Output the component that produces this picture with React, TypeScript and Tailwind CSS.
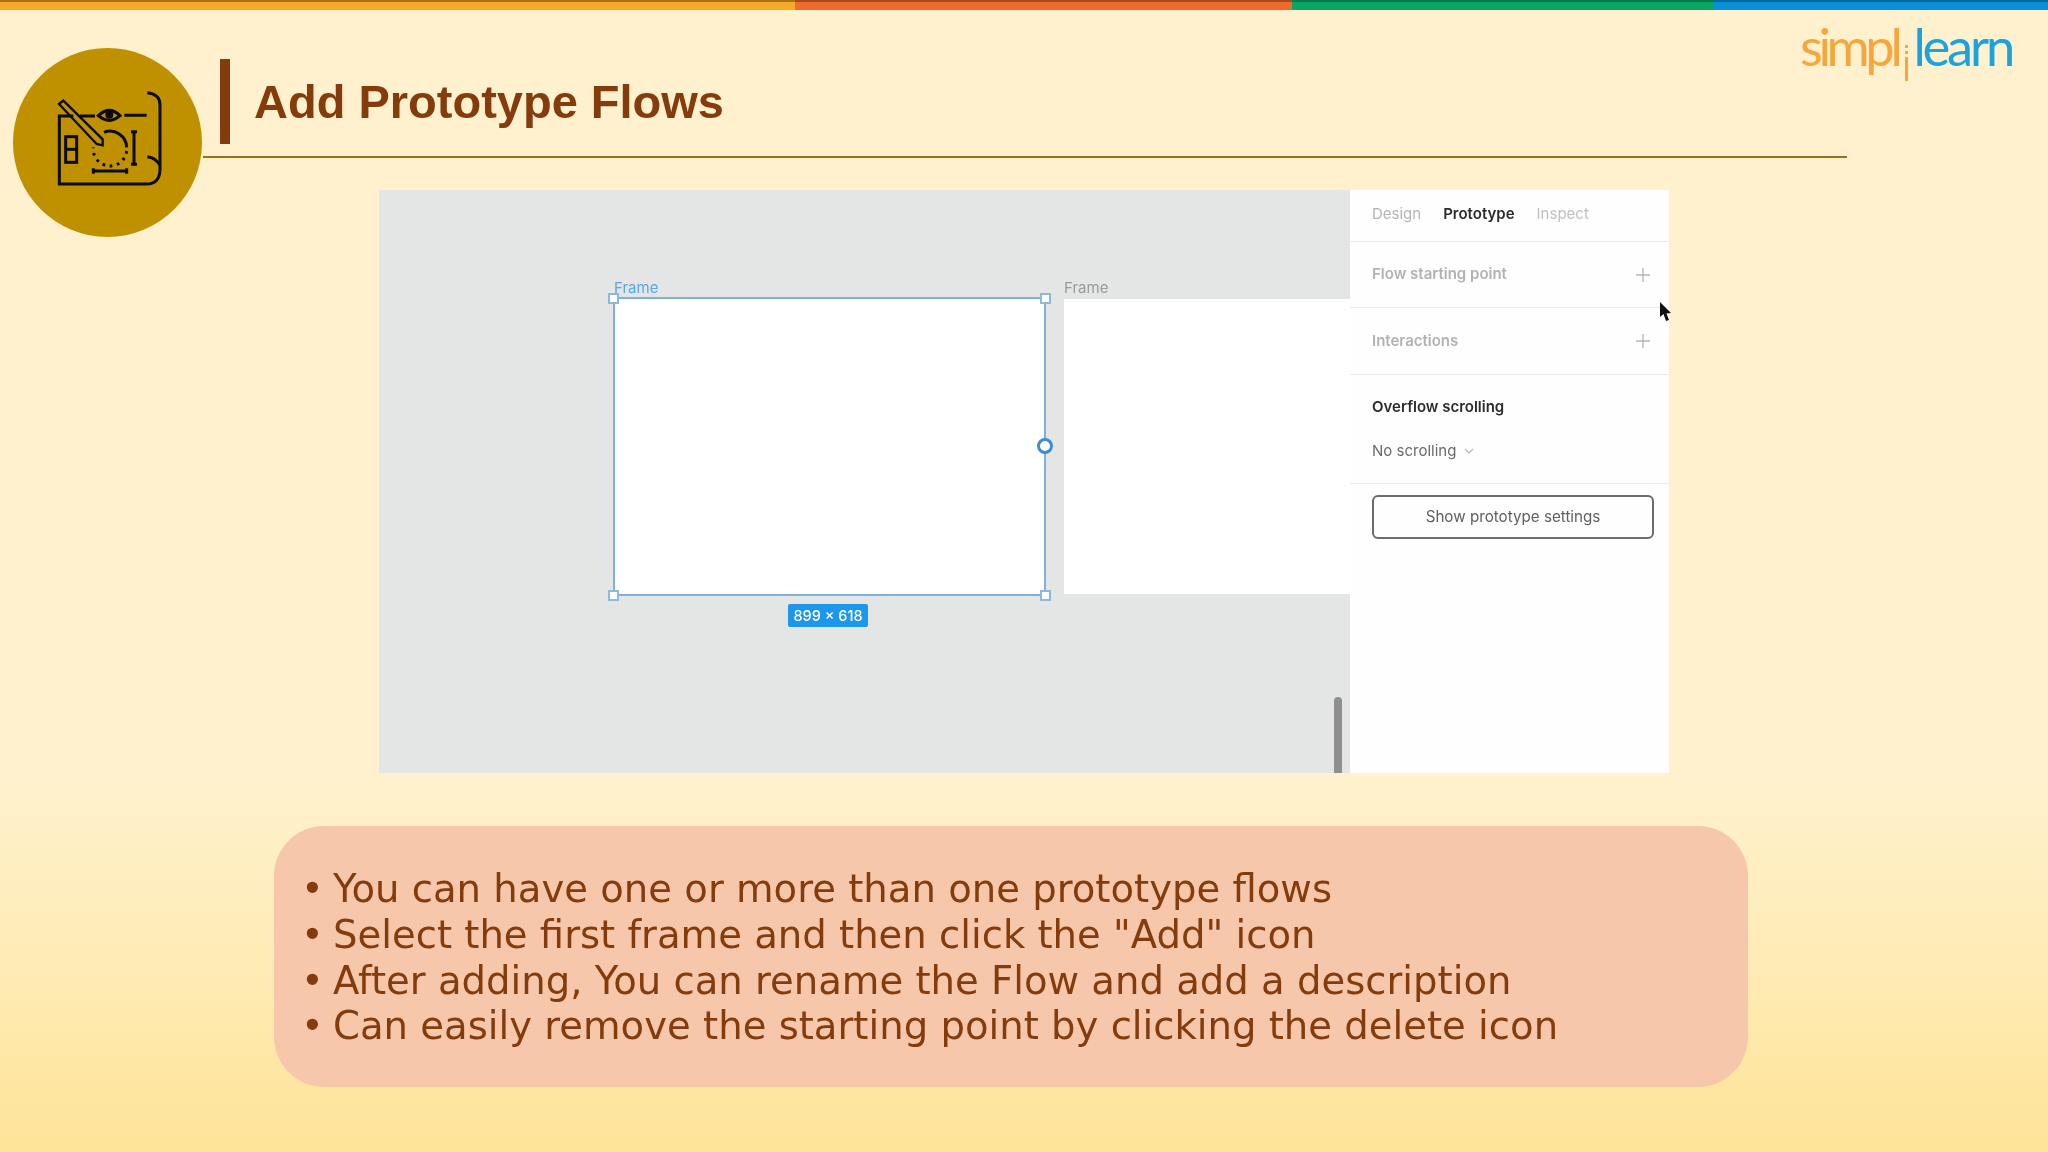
export default function App() {
  return (
    <div className="flex h-[1152px] w-[2048px] flex-col overflow-hidden bg-gradient-to-b from-[#fff1cd] from-[68%] to-[#fee498] font-['Liberation_Sans',sans-serif]">
      <TopBar />
      <Header />
      <FigmaPanel />
      <Callout />
    </div>
  );
}

function TopBar() {
  return (
    <div className="flex h-[10px] shrink-0">
      <div className="w-[795px] border-t-2 border-[#a9701c] bg-[#f6a828]" />
      <div className="w-[497px] border-t-2 border-[#a54a1c] bg-[#ee6b2d]" />
      <div className="w-[422px] border-t-2 border-[#0a7a4a] bg-[#0aa664]" />
      <div className="flex-1 border-t-2 border-[#0a6aa0] bg-[#0c8fd9]" />
    </div>
  );
}

function Header() {
  return (
    <div className="flex h-[180px] shrink-0 items-start pl-[13px] pt-[38px]">
      <div className="h-[189px] w-[189px] shrink-0 rounded-full bg-[#bf9000] pl-[17px] pt-[22px]">
        <BlueprintIcon />
      </div>
      <div className="flex-1 -mt-[21px] pl-px">
        <div className="flex items-start justify-between">
          <div className="ml-[17px] mt-[32px] flex h-[85px] items-center border-l-[10px] border-[#843c0c] pl-[24px]">
            <h1 className="text-[47px] font-bold leading-none text-[#843c0c] blur-[0.4px]">Add Prototype Flows</h1>
          </div>
          <Logo />
        </div>
        <div className="mt-[12px] h-[2px] w-[1644px] bg-[#94701f]" />
      </div>
    </div>
  );
}

function BlueprintIcon() {
  return (
    <svg className="blur-[0.4px]" width="150" height="130" viewBox="0 0 450 390" fill="none" stroke="#0b0b0b" strokeWidth="9">
      <path d="M352 68 Q390 72 390 105 V300 Q388 342 350 342 H88 V138 H130" />
      <path d="M352 260 Q375 262 390 285" />
      <path d="M150 138 H195 M283 136 H350" />
      <path d="M205 137 Q238 105 270 137 Q238 165 205 137 Z" />
      <circle cx="238" cy="134" r="12" fill="#0b0b0b" stroke="none" />
      <path d="M87 102 L100 92 L218 208 L218 226 L200 222 Z" strokeWidth="7" />
      <path d="M222 187 A50 50 0 0 1 290 232" />
      <path d="M290 243 A50 50 0 0 1 190 232" strokeDasharray="8 14" />
      <path d="M312 185 V283 M303 185 H321 M303 283 H321" />
      <path d="M190 303 H290 M190 295 V311 M290 295 V311" />
      <rect x="107" y="200" width="33" height="77" />
      <path d="M107 238 H140" />
    </svg>
  );
}

function Logo() {
  return (
    <div className="mr-[36px] -mt-[5px] flex items-start font-['Lato',sans-serif] text-[52.5px] font-normal leading-[48px] tracking-[-3.2px] blur-[0.4px]">
      <span className="tracking-[-4.4px] text-[#f7a63e]">simpl</span>
      <span className="ml-[7px] mr-[5px] mt-[23px] flex w-[3px] flex-col gap-[3px]">
        <span className="h-[3px] bg-[#f7a63e]" />
        <span className="h-[3px] bg-[#f7a63e]" />
        <span className="h-[24px] bg-[#f7a63e]" />
      </span>
      <span className="text-[#1ba3df]">learn</span>
    </div>
  );
}

function Handle({ className }: { className: string }) {
  return <div className={`absolute h-[11px] w-[11px] border-2 border-[#8bb9e0] bg-white ${className}`} />;
}

function FigmaPanel() {
  return (
    <div className="ml-[379px] flex h-[583px] w-[1290px] shrink-0 font-['Inter',sans-serif] blur-[0.5px]">
      <Canvas />
      <Sidebar />
    </div>
  );
}

function Canvas() {
  return (
    <div className="relative flex-1 bg-[#e4e5e5]">
      <span className="absolute left-[235px] top-[89px] text-[15px] leading-[18px] text-[#5ba6e6]">Frame</span>
      <div className="absolute left-[234px] top-[107px] h-[299px] w-[433px] border-2 border-[#7fb1dc] bg-white">
        <Handle className="-left-[7px] -top-[6px]" />
        <Handle className="-right-[7px] -top-[6px]" />
        <Handle className="-bottom-[7px] -left-[7px]" />
        <Handle className="-bottom-[7px] -right-[7px]" />
        <div className="absolute -right-[9px] top-[139px] h-[16px] w-[16px] rounded-full border-[3px] border-[#3a8ecf] bg-white" />
      </div>
      <div className="absolute left-[409px] top-[414px] flex h-[23px] w-[80px] items-center justify-center rounded-[2px] bg-[#1d97ee] text-[14.5px] font-medium text-white">
        899 × 618
      </div>
      <span className="absolute left-[685px] top-[89px] text-[15px] leading-[18px] text-[#9a9a9a]">Frame</span>
      <div className="absolute left-[685px] right-0 top-[109px] h-[295px] bg-white" />
      <div className="absolute bottom-0 left-[955px] h-[76px] w-[8px] rounded-t-[4px] bg-[#8f8f8f]" />
    </div>
  );
}

function PlusRow({ label, height }: { label: string; height: string }) {
  return (
    <div className={`flex items-center justify-between border-b border-[#ebebeb] pl-[22px] pr-[18px] text-[15px] font-semibold text-[#b2b2b2] ${height}`}>
      {label}
      <svg width="16" height="16" viewBox="0 0 16 16" stroke="#b5b5b5" strokeWidth="1.3">
        <path d="M8 1 V15 M1 8 H15" />
      </svg>
    </div>
  );
}

function Sidebar() {
  return (
    <div className="relative w-[319px] bg-[#fefefe]">
      <div className="flex h-[52px] items-center gap-[22px] border-b border-[#ebebeb] pb-[2px] pl-[22px] text-[15px]">
        <span className="text-[#b4b4b4]">Design</span>
        <span className="font-semibold text-[#2c2c2c]">Prototype</span>
        <span className="text-[#c0c0c0]">Inspect</span>
      </div>
      <PlusRow label="Flow starting point" height="h-[66px]" />
      <PlusRow label="Interactions" height="h-[67px]" />
      <div className="h-[109px] border-b border-[#ebebeb] pl-[22px] pt-[22px]">
        <div className="text-[15px] font-semibold leading-[20px] text-[#2c2c2c]">Overflow scrolling</div>
        <div className="mt-[24px] flex items-center gap-[8px] text-[15px] leading-[20px] text-[#6a6a6a]">
          No scrolling
          <svg width="10" height="6" viewBox="0 0 10 6" fill="none" stroke="#b5b5b5" strokeWidth="1.2">
            <path d="M1 1 L5 5 L9 1" />
          </svg>
        </div>
      </div>
      <button className="ml-[22px] mt-[11px] flex h-[44px] w-[282px] items-center justify-center rounded-[6px] border-2 border-[#6c6c6c] pt-[1px] text-[15.2px] text-[#5f5f5f]">
        Show prototype settings
      </button>
      <svg className="absolute left-[310px] top-[112px]" width="11" height="20" viewBox="0 0 11 20">
        <path d="M0 0 V15 L3.5 12 L6 19 L9 18 L6.5 11.5 L11 11 Z" fill="#111111" />
      </svg>
    </div>
  );
}

const bullets = [
  "You can have one or more than one prototype flows",
  'Select the first frame and then click the "Add" icon',
  "After adding, You can rename the Flow and add a description",
  "Can easily remove the starting point by clicking the delete icon",
];

function Callout() {
  return (
    <div className="ml-[274px] mt-[53px] h-[261px] w-[1474px] rounded-[50px] bg-[#f6c7ab] pl-[29px] pt-[40px] font-['DejaVu_Sans',sans-serif] text-[38.6px] leading-[45.8px] text-[#843c0c]">
      {bullets.map((line) => (
        <div key={line} className="flex blur-[0.3px]">
          <span className="-ml-[2px] w-[32px] shrink-0">•</span>
          <span className="whitespace-nowrap">{line}</span>
        </div>
      ))}
    </div>
  );
}
